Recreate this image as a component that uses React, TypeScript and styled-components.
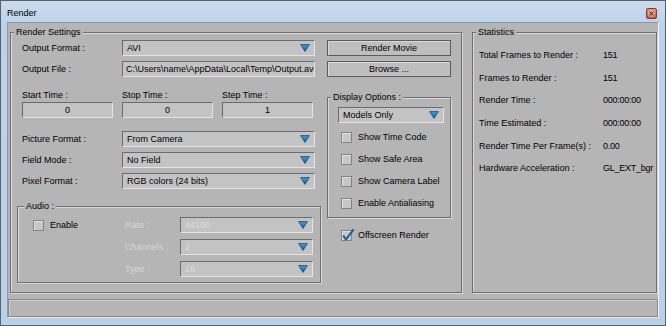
import React from 'react'
import styled, { createGlobalStyle } from 'styled-components'

const GlobalStyle = createGlobalStyle`
  html, body {
    margin: 0;
    padding: 0;
    background: #ffffff;
  }
  body {
    font-family: "Liberation Sans", Arial, sans-serif;
    font-size: 9px;
    color: #000;
  }
  * {
    box-sizing: border-box;
  }
`

const PANEL = '#b5b5b5'

const Window = styled.div`
  width: 666px;
  height: 326px;
  border: 1px solid #56626f;
  background: linear-gradient(#cadbee 0px, #bed3ea 22px, #b9d0e8 100%);
  display: flex;
  flex-direction: column;
`

const TitleBar = styled.div`
  height: 21px;
  padding: 4px 8px 0 6px;
  display: flex;
  align-items: center;
  justify-content: space-between;
  line-height: 11px;
`

const Client = styled.div`
  flex: 1;
  margin: 0 6px 7px 6px;
  background: ${PANEL};
  border: 1px solid;
  border-color: #8d99a6 #eef4fa #eef4fa #8d99a6;
  padding: 4px 0 0 0;
  display: flex;
  flex-direction: column;
`

const GroupsRow = styled.div`
  flex: 1;
  display: flex;
  gap: 10px;
  padding: 0 1px 0 2px;
`

const Group = styled.fieldset<{ $width?: number }>`
  margin: 0;
  padding: 0;
  min-width: 0;
  ${p => (p.$width ? `width: ${p.$width}px; flex: none;` : 'flex: 1;')}
  border: 1px solid #6e6e6e;
  box-shadow: inset 1px 1px 0 #d9d9d9, 1px 1px 0 #d9d9d9;
`

const Legend = styled.legend<{ $indent: number }>`
  margin-left: ${p => p.$indent}px;
  padding: 0 2px;
  line-height: 11px;
  background: ${PANEL};
`

const Body = styled.div<{ $pad: string }>`
  padding: ${p => p.$pad};
`

const SettingsGrid = styled.div`
  display: grid;
  grid-template-columns: 293px 124px;
  column-gap: 12px;
  align-items: start;
`

const Column = styled.div`
  display: flex;
  flex-direction: column;
`

const FormRow = styled.div<{ $top?: number }>`
  display: grid;
  grid-template-columns: 100px 193px;
  align-items: center;
  height: 16px;
  margin-top: ${p => p.$top ?? 0}px;
`

const Label = styled.span<{ $disabled?: boolean }>`
  color: ${p => (p.$disabled ? '#d6d6d6' : '#000')};
  white-space: nowrap;
`

const Sunken = styled.div`
  height: 16px;
  border: 1px solid;
  border-color: #6c6c6c #e4e4e4 #e4e4e4 #6c6c6c;
  background: #c3c3c3;
  line-height: 14px;
  white-space: nowrap;
  overflow: hidden;
`

const SelectBox = styled(Sunken)<{ $disabled?: boolean }>`
  display: flex;
  align-items: center;
  justify-content: space-between;
  padding: 0 4px 0 4px;
  color: ${p => (p.$disabled ? '#dcdcdc' : '#000')};
`

const TextBox = styled(Sunken)`
  padding: 0 3px;
`

const TimeBox = styled(Sunken)`
  text-align: center;
`

const TimeGrid = styled.div`
  display: grid;
  grid-template-columns: repeat(3, 91px);
  column-gap: 9px;
  row-gap: 1px;
  margin-top: 13px;
  line-height: 11px;
`

const Stack = styled.div<{ $top: number }>`
  display: flex;
  flex-direction: column;
  gap: 5px;
  margin-top: ${p => p.$top}px;
`

const AudioGroup = styled(Group)`
  width: 304px;
  flex: none;
  margin: 12px 0 0 -5px;
`

const AudioGrid = styled.div`
  display: grid;
  grid-template-columns: 92px 55px 133px;
  grid-auto-rows: 16px;
  row-gap: 6px;
  align-items: center;
`

const Button = styled.div<{ $top?: number }>`
  height: 16px;
  margin-top: ${p => p.$top ?? 0}px;
  border: 1px solid #5c5c5c;
  background: #bebebe;
  box-shadow: inset 1px 1px 0 #dadada;
  text-align: center;
  line-height: 14px;
`

const DisplayGroup = styled(Group)`
  width: 124px;
  flex: none;
  margin-top: 15px;
`

const CheckRow = styled.div<{ $top?: number; $left?: number }>`
  display: flex;
  align-items: center;
  height: 22px;
  margin-top: ${p => p.$top ?? 0}px;
  padding-left: ${p => p.$left ?? 0}px;
  white-space: nowrap;
`

const Box = styled.span`
  position: relative;
  width: 11px;
  height: 11px;
  flex: none;
  margin-right: 6px;
  border: 1px solid #838383;
  background: #c7c7c7;
  box-shadow: inset 1px 1px 0 #e2e2e2;
`

const Tick = styled.svg`
  position: absolute;
  left: 0;
  top: -3px;
`

const StatsGrid = styled.div`
  display: grid;
  grid-template-columns: 124px 1fr;
  grid-auto-rows: 22.6px;
  align-items: center;
`

const StatValue = styled.span`
  letter-spacing: -0.25px;
  white-space: nowrap;
`

const StatusBar = styled.div`
  height: 18px;
  margin: 6px 0 0 0;
  border: 1px solid #8a8a8a;
  box-shadow: inset 1px 1px 0 #d0d0d0, 0 1px 0 #e6e6e6;
  background: ${PANEL};
`

const Arrow = () => (
  <svg width="10" height="8" viewBox="0 0 10 8">
    <defs>
      <linearGradient id="arrowFill" x1="0" y1="0" x2="0" y2="1">
        <stop offset="0" stopColor="#4b9bd3" />
        <stop offset="1" stopColor="#14609a" />
      </linearGradient>
    </defs>
    <path d="M0.6 0.6 H9.4 L5 7.4 Z" fill="url(#arrowFill)" stroke="#0f4c7c" strokeWidth="0.8" />
  </svg>
)

const Select = ({ value, disabled }: { value: string; disabled?: boolean }) => (
  <SelectBox $disabled={disabled}>
    <span>{value}</span>
    <Arrow />
  </SelectBox>
)

const Check = ({ label, checked, top, left }: { label: string; checked?: boolean; top?: number; left?: number }) => (
  <CheckRow $top={top} $left={left}>
    <Box>
      {checked && (
        <Tick width="14" height="14" viewBox="0 0 14 14">
          <path d="M1.2 7.6 L4 11.4 L11.6 1.4" fill="none" stroke="#1b5c9c" strokeWidth="2" strokeLinejoin="round" />
        </Tick>
      )}
    </Box>
    {label}
  </CheckRow>
)

const CloseIcon = () => (
  <svg width="11" height="11" viewBox="0 0 11 11">
    <defs>
      <linearGradient id="closeFill" x1="0" y1="0" x2="0" y2="1">
        <stop offset="0" stopColor="#dc9384" />
        <stop offset="1" stopColor="#b2513f" />
      </linearGradient>
    </defs>
    <rect x="0.5" y="0.5" width="10" height="10" rx="1.5" fill="url(#closeFill)" stroke="#8c3e31" />
    <rect x="3" y="3" width="5" height="5" fill="none" stroke="#f6e2dc" strokeWidth="0.8" />
    <path d="M3.4 3.4 L7.6 7.6 M7.6 3.4 L3.4 7.6" stroke="#5a1e15" strokeWidth="0.9" />
  </svg>
)

const stats = [
  ['Total Frames to Render :', '151'],
  ['Frames to Render :', '151'],
  ['Render Time :', '000:00:00'],
  ['Time Estimated :', '000:00:00'],
  ['Render Time Per Frame(s) :', '0.00'],
  ['Hardware Acceleration :', 'GL_EXT_bgr']
]

export default function App() {
  return (
    <>
      <GlobalStyle />
      <Window>
        <TitleBar>
          <span>Render</span>
          <CloseIcon />
        </TitleBar>
        <Client>
          <GroupsRow>
            <Group $width={452}>
              <Legend $indent={3}>Render Settings</Legend>
              <Body $pad="2px 9px 0 11px">
                <SettingsGrid>
                  <Column>
                    <FormRow>
                      <Label>Output Format :</Label>
                      <Select value="AVI" />
                    </FormRow>
                    <FormRow $top={5}>
                      <Label>Output File :</Label>
                      <TextBox>C:\Users\name\AppData\Local\Temp\Output.avi</TextBox>
                    </FormRow>
                    <TimeGrid>
                      <Label>Start Time :</Label>
                      <Label>Stop Time :</Label>
                      <Label>Step Time :</Label>
                      <TimeBox>0</TimeBox>
                      <TimeBox>0</TimeBox>
                      <TimeBox>1</TimeBox>
                    </TimeGrid>
                    <Stack $top={13}>
                      <FormRow>
                        <Label>Picture Format :</Label>
                        <Select value="From Camera" />
                      </FormRow>
                      <FormRow>
                        <Label>Field Mode :</Label>
                        <Select value="No Field" />
                      </FormRow>
                      <FormRow>
                        <Label>Pixel Format :</Label>
                        <Select value="RGB colors (24 bits)" />
                      </FormRow>
                    </Stack>
                    <AudioGroup>
                      <Legend $indent={6}>Audio :</Legend>
                      <Body $pad="5px 0 5px 15px">
                        <AudioGrid>
                          <Check label="Enable" />
                          <Label $disabled>Rate :</Label>
                          <Select value="44100" disabled />
                          <span />
                          <Label $disabled>Channels :</Label>
                          <Select value="2" disabled />
                          <span />
                          <Label $disabled>Type :</Label>
                          <Select value="16" disabled />
                        </AudioGrid>
                      </Body>
                    </AudioGroup>
                  </Column>
                  <Column>
                    <Button>Render Movie</Button>
                    <Button $top={5}>Browse ...</Button>
                    <DisplayGroup>
                      <Legend $indent={3}>Display Options :</Legend>
                      <Body $pad="4px 6px 3px 10px">
                        <Select value="Models Only" />
                        <Column>
                          <Check label="Show Time Code" top={3} left={3} />
                          <Check label="Show Safe Area" left={3} />
                          <Check label="Show Camera Label" left={3} />
                          <Check label="Enable Antialiasing" left={3} />
                        </Column>
                      </Body>
                    </DisplayGroup>
                    <Check label="Offscreen Render" checked top={6} left={14} />
                  </Column>
                </SettingsGrid>
              </Body>
            </Group>
            <Group>
              <Legend $indent={3}>Statistics</Legend>
              <Body $pad="6px 4px 0 6px">
                <StatsGrid>
                  {stats.map(([name, value]) => (
                    <React.Fragment key={name}>
                      <Label>{name}</Label>
                      <StatValue>{value}</StatValue>
                    </React.Fragment>
                  ))}
                </StatsGrid>
              </Body>
            </Group>
          </GroupsRow>
          <StatusBar />
        </Client>
      </Window>
    </>
  )
}
